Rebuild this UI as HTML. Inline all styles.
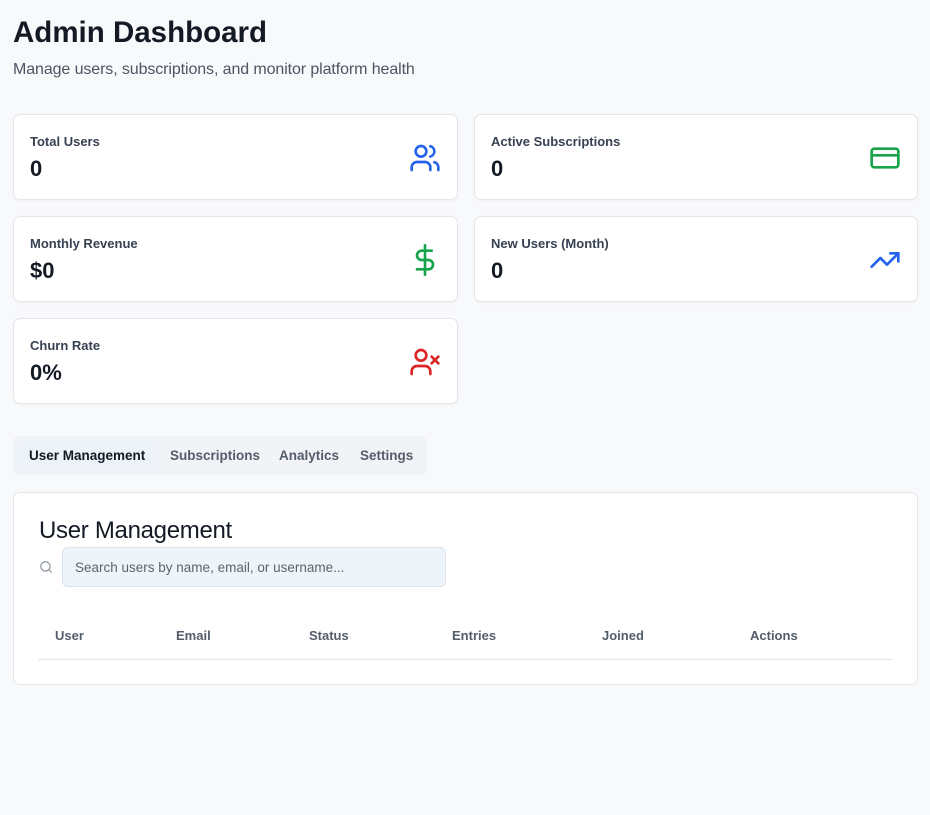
<!DOCTYPE html>
<html><head><style>
*{box-sizing:border-box;margin:0;padding:0}
body{width:930px;height:815px;background:#f8f9fb;font-family:"Liberation Sans",sans-serif;color:#111827;position:relative;overflow:hidden}
h1{position:absolute;left:13px;top:16px;font-size:29.5px;font-weight:700;color:#141a24}
.sub{position:absolute;left:13px;top:61px;font-size:16px;color:#4b5563;letter-spacing:-.1px}
.card{position:absolute;width:445px;height:86px;background:#fff;border:1px solid #e3e6ea;border-radius:7px;box-shadow:0 1px 2px rgba(0,0,0,.04)}
.card .l{position:absolute;left:16px;top:19px;font-size:13px;font-weight:700;color:#374151}
.card .v{position:absolute;left:16px;top:41px;font-size:22px;font-weight:700;color:#141a24}
.card svg{position:absolute;right:16px;top:27px}
.tabs{position:absolute;left:13px;top:436px;width:414px;height:39px;background:#f1f3f6;border-radius:6px}
.tab{position:absolute;top:4px;height:31px;line-height:31px;font-size:13.5px;font-weight:700;color:#555d6a}
.tab.a{background:#edf3f9;color:#141a24;border-radius:5px;padding:0 13px;left:3px}
.panel{position:absolute;left:13px;top:492px;width:905px;height:193px;background:#fff;border:1px solid #e3e6ea;border-radius:7px}
.panel h2{position:absolute;left:25px;top:24px;font-size:24px;font-weight:400;color:#141a24;letter-spacing:-.3px}
.search{position:absolute;left:48px;top:54px;width:384px;height:40px;background:#edf4fa;border:1px solid #dde3ea;border-radius:6px;font-size:13.5px;color:#5b6470;padding:12px 12px}
.th{position:absolute;top:135px;font-size:13px;font-weight:700;color:#555d6a}
.line{position:absolute;left:24px;right:24px;top:166px;border-top:1px solid #e3e6ea}
</style></head><body>
<h1>Admin Dashboard</h1>
<div class="sub">Manage users, subscriptions, and monitor platform health</div>

<div class="card" style="left:13px;top:114px"><div class="l">Total Users</div><div class="v">0</div>
<svg width="32" height="32" viewBox="0 0 24 24" fill="none" stroke="#2563eb" stroke-width="2" stroke-linecap="round" stroke-linejoin="round"><path d="M16 21v-2a4 4 0 0 0-4-4H6a4 4 0 0 0-4 4v2"/><circle cx="9" cy="7" r="4"/><path d="M22 21v-2a4 4 0 0 0-3-3.87"/><path d="M16 3.13a4 4 0 0 1 0 7.75"/></svg></div>

<div class="card" style="left:474px;top:114px;width:444px"><div class="l">Active Subscriptions</div><div class="v">0</div>
<svg width="32" height="32" viewBox="0 0 24 24" fill="none" stroke="#16a34a" stroke-width="2" stroke-linecap="round" stroke-linejoin="round"><rect x="2" y="5" width="20" height="14" rx="2"/><line x1="2" y1="10" x2="22" y2="10"/></svg></div>

<div class="card" style="left:13px;top:216px"><div class="l">Monthly Revenue</div><div class="v">$0</div>
<svg width="32" height="32" viewBox="0 0 24 24" fill="none" stroke="#16a34a" stroke-width="2" stroke-linecap="round" stroke-linejoin="round"><line x1="12" y1="1" x2="12" y2="23"/><path d="M17 5H9.5a3.5 3.5 0 0 0 0 7h5a3.5 3.5 0 0 1 0 7H6"/></svg></div>

<div class="card" style="left:474px;top:216px;width:444px"><div class="l">New Users (Month)</div><div class="v">0</div>
<svg width="32" height="32" viewBox="0 0 24 24" fill="none" stroke="#2563eb" stroke-width="2" stroke-linecap="round" stroke-linejoin="round"><polyline points="22 7 13.5 15.5 8.5 10.5 2 17"/><polyline points="16 7 22 7 22 13"/></svg></div>

<div class="card" style="left:13px;top:318px"><div class="l">Churn Rate</div><div class="v">0%</div>
<svg width="32" height="32" viewBox="0 0 24 24" fill="none" stroke="#dc2626" stroke-width="2" stroke-linecap="round" stroke-linejoin="round"><path d="M16 21v-2a4 4 0 0 0-4-4H6a4 4 0 0 0-4 4v2"/><circle cx="9" cy="7" r="4"/><line x1="17" y1="8" x2="22" y2="13"/><line x1="22" y1="8" x2="17" y2="13"/></svg></div>

<div class="tabs">
<div class="tab a">User Management</div>
<div class="tab" style="left:157px">Subscriptions</div>
<div class="tab" style="left:266px">Analytics</div>
<div class="tab" style="left:347px">Settings</div>
</div>

<div class="panel">
<h2>User Management</h2>
<svg style="position:absolute;left:25px;top:67px" width="14" height="14" viewBox="0 0 24 24" fill="none" stroke="#8a929c" stroke-width="2" stroke-linecap="round"><circle cx="11" cy="11" r="8"/><line x1="21" y1="21" x2="16.65" y2="16.65"/></svg>
<div class="search">Search users by name, email, or username...</div>
<div class="th" style="left:41px">User</div>
<div class="th" style="left:162px">Email</div>
<div class="th" style="left:295px">Status</div>
<div class="th" style="left:438px">Entries</div>
<div class="th" style="left:588px">Joined</div>
<div class="th" style="left:736px">Actions</div>
<div class="line"></div>
</div>
</body></html>
